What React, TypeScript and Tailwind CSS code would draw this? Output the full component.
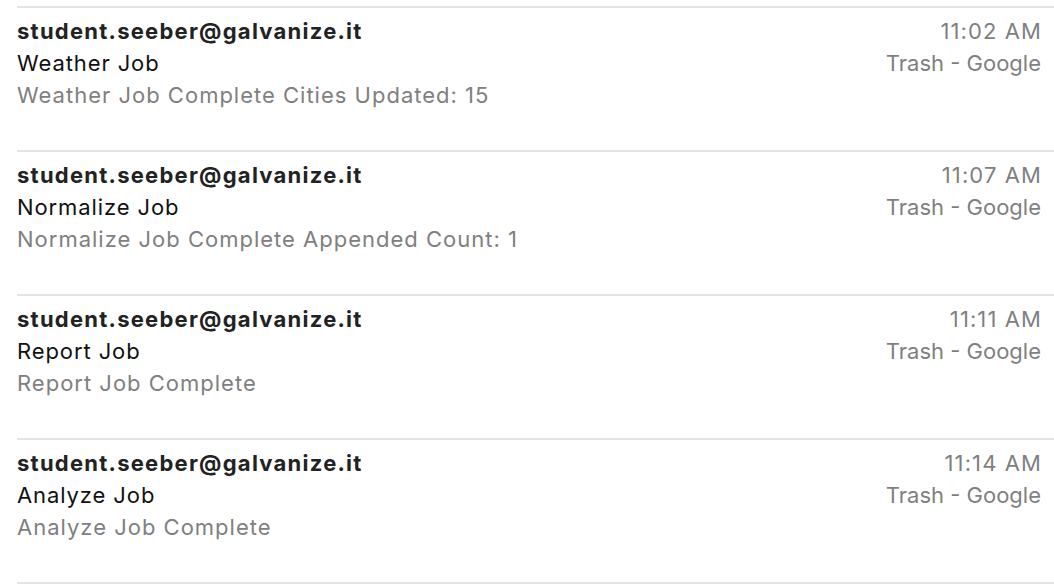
import React from "react";

const items = [
  { time: "11:02 AM", subject: "Weather Job", preview: "Weather Job Complete Cities Updated: 15" },
  { time: "11:07 AM", subject: "Normalize Job", preview: "Normalize Job Complete Appended Count: 1" },
  { time: "11:11 AM", subject: "Report Job", preview: "Report Job Complete" },
  { time: "11:14 AM", subject: "Analyze Job", preview: "Analyze Job Complete" },
];

export default function App() {
  return (
    <div
      className="w-[1054px] h-[584px] bg-white overflow-hidden pt-[6px] pl-[17px]"
      style={{ fontFamily: 'Inter, "Liberation Sans", Arial, sans-serif' }}
    >
      {items.map((it) => (
        <div key={it.time} className="h-[144px] border-t-2 border-[#e4e4e4] pt-[7px] pr-[13px] flex justify-between text-[22px] leading-[32px]">
          <div className="flex flex-col">
            <div className="font-bold text-[#222222] tracking-[1.25px]">student.seeber@galvanize.it</div>
            <div className="text-[#111111] tracking-[0.9px]">{it.subject}</div>
            <div className="text-[#808080] tracking-[1px]">{it.preview}</div>
          </div>
          <div className="flex flex-col items-end text-[#7f7f7f]">
            <div className="tracking-[1.1px] -mr-[1px]">{it.time}</div>
            <div>Trash - Google</div>
          </div>
        </div>
      ))}
      <div className="border-t-2 border-[#e4e4e4]" />
    </div>
  );
}
